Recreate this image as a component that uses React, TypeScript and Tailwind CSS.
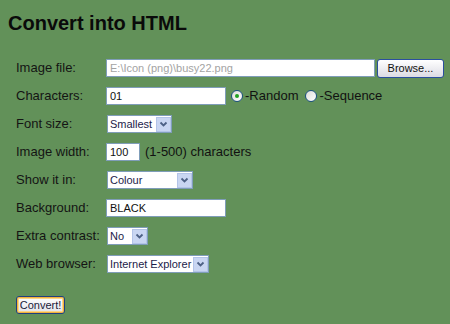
import React from "react";

const font = { fontFamily: '"Liberation Sans", Arial, sans-serif' };

const Arrow: React.FC = () => (
    <span className="flex h-[15px] w-[15px] shrink-0 items-center justify-center border border-[#b3c4e8] bg-[#c9d6f2]">
        <svg width="9" height="7" viewBox="0 0 9 7">
            <path d="M1.5 1.5 L4.5 4.5 L7.5 1.5" fill="none" stroke="#4d6185" strokeWidth="1.8" />
        </svg>
    </span>
);

const TextBox: React.FC<{ value: string; width: string; muted?: boolean }> = ({ value, width, muted }) => (
    <div
        className={`flex h-[18px] shrink-0 items-center whitespace-nowrap border border-[#7f9db9] bg-white px-[3px] text-[11px] ${width} ${
            muted ? "text-[#a3a3a3]" : "text-[#111]"
        }`}
    >
        {value}
    </div>
);

const Select: React.FC<{ value: string; width: string }> = ({ value, width }) => (
    <div className={`ml-px flex h-[18px] shrink-0 items-center justify-between border border-[#7f9db9] bg-white pl-[2px] text-[11px] text-[#1c1c4a] ${width}`}>
        <span className="whitespace-nowrap">{value}</span>
        <Arrow />
    </div>
);

const Radio: React.FC<{ checked?: boolean }> = ({ checked }) => (
    <span className="flex h-[12px] w-[12px] items-center justify-center rounded-full border border-[#1c5180] bg-gradient-to-br from-[#dcdcd7] to-white">
        {checked && <span className="h-[4px] w-[4px] rounded-full bg-[#21a121]" />}
    </span>
);

const rows: { label: string; field: React.ReactNode }[] = [
    {
        label: "Image file:",
        field: (
            <div className="flex items-center gap-[2px]">
                <TextBox value="E:\Icon (png)\busy22.png" width="w-[269px]" muted />
                <div className="flex h-[19px] w-[67px] items-center justify-center rounded-[3px] border border-[#2b4f9e] bg-gradient-to-b from-white to-[#dcdce4] text-[11px] text-[#111]">
                    Browse...
                </div>
            </div>
        ),
    },
    {
        label: "Characters:",
        field: (
            <div className="flex items-center text-[13px] text-[#111]">
                <TextBox value="01" width="w-[120px]" />
                <span className="ml-[5px]"><Radio checked /></span>
                <span className="ml-[2px]">-Random</span>
                <span className="ml-[7px]"><Radio /></span>
                <span className="ml-[2px]">-Sequence</span>
            </div>
        ),
    },
    { label: "Font size:", field: <Select value="Smallest" width="w-[65px]" /> },
    {
        label: "Image width:",
        field: (
            <div className="flex items-center text-[13px] text-[#111]">
                <TextBox value="100" width="w-[34px]" />
                <span className="ml-[5px]">(1-500) characters</span>
            </div>
        ),
    },
    { label: "Show it in:", field: <Select value="Colour" width="w-[86px]" /> },
    { label: "Background:", field: <TextBox value="BLACK" width="w-[120px]" /> },
    { label: "Extra contrast:", field: <Select value="No" width="w-[41px]" /> },
    { label: "Web browser:", field: <Select value="Internet Explorer" width="w-[102px]" /> },
];

export default function App() {
    return (
        <div className="h-[324px] w-[450px] overflow-hidden bg-[#629159]" style={font}>
            <h1 className="px-2 pt-[12px] text-[20px] font-bold leading-[23px] text-[#0a0a0a]">Convert into HTML</h1>

            <div className="mt-[19px] flex flex-col pl-4">
                {rows.map((row) => (
                    <div key={row.label} className="flex h-[28px] items-center">
                        <span className="w-[90px] shrink-0 whitespace-nowrap text-[13px] text-[#141414]">{row.label}</span>
                        {row.field}
                    </div>
                ))}
            </div>

            <div className="ml-4 mt-[18px] flex h-[18px] w-[49px] items-center justify-center rounded-[3px] border border-[#1f3f80] bg-gradient-to-b from-white to-[#e2e2ea] text-[11px] text-[#1a1a3a] shadow-[inset_0_0_0_1px_#f3b13c,inset_0_0_0_2px_#fbd68a]">
                Convert!
            </div>
        </div>
    );
}
